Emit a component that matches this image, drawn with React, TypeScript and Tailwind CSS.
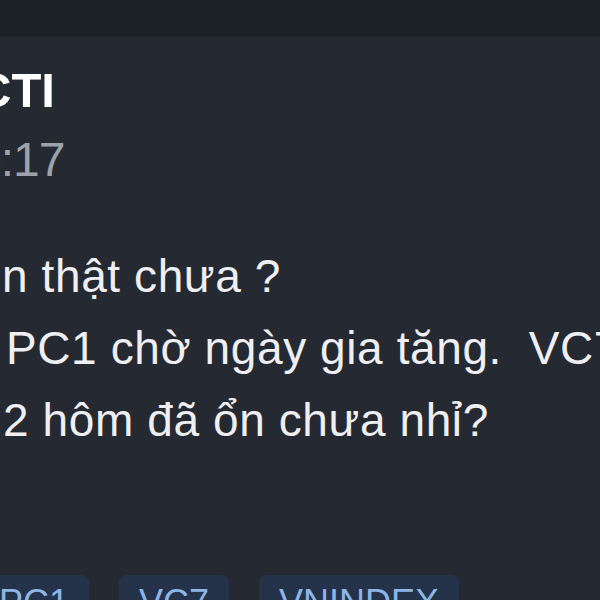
const lines = [
  { text: "n thật chưa ?", pad: "pl-[2px]" },
  { text: "PC1 chờ ngày gia tăng.  VC7", pad: "pl-[6px]" },
  { text: "2 hôm đã ổn chưa nhỉ?", pad: "pl-[3px]" },
];

const tags = ["PC1", "VC7", "VNINDEX"];

const App = () => {
  return (
    <div
      className="w-[600px] h-[600px] overflow-hidden bg-[#252a32] flex flex-col"
      style={{ fontFamily: '"Liberation Sans", Arial, sans-serif' }}
    >
      {/* top bar */}
      <div className="h-[37px] shrink-0 bg-[#1c2027]" />

      {/* post header */}
      <div className="mt-[29px] ml-[-24px] text-[49px] leading-none font-bold text-white whitespace-nowrap">
        CTI
      </div>
      <div className="mt-[21px] ml-[-25px] text-[48px] leading-none tracking-[-1px] text-[#9ea3ab] whitespace-nowrap">
        5:17
      </div>

      {/* post body */}
      <div className="mt-[56px] text-[46px] leading-[72px] tracking-[0.6px] text-[#efeff1]">
        {lines.map((l) => (
          <div key={l.text} className={`${l.pad} whitespace-pre`}>
            {l.text}
          </div>
        ))}
      </div>

      {/* tags */}
      <div className="mt-[119px] ml-[-21px] flex gap-[30px] whitespace-nowrap">
        {tags.map((t) => (
          <span
            key={t}
            className="shrink-0 rounded-lg bg-[#24334a] px-5 pt-[10px] pb-3 text-[36px] leading-none text-[#8db5e6]"
          >
            {t}
          </span>
        ))}
      </div>
    </div>
  );
};

export default App;
